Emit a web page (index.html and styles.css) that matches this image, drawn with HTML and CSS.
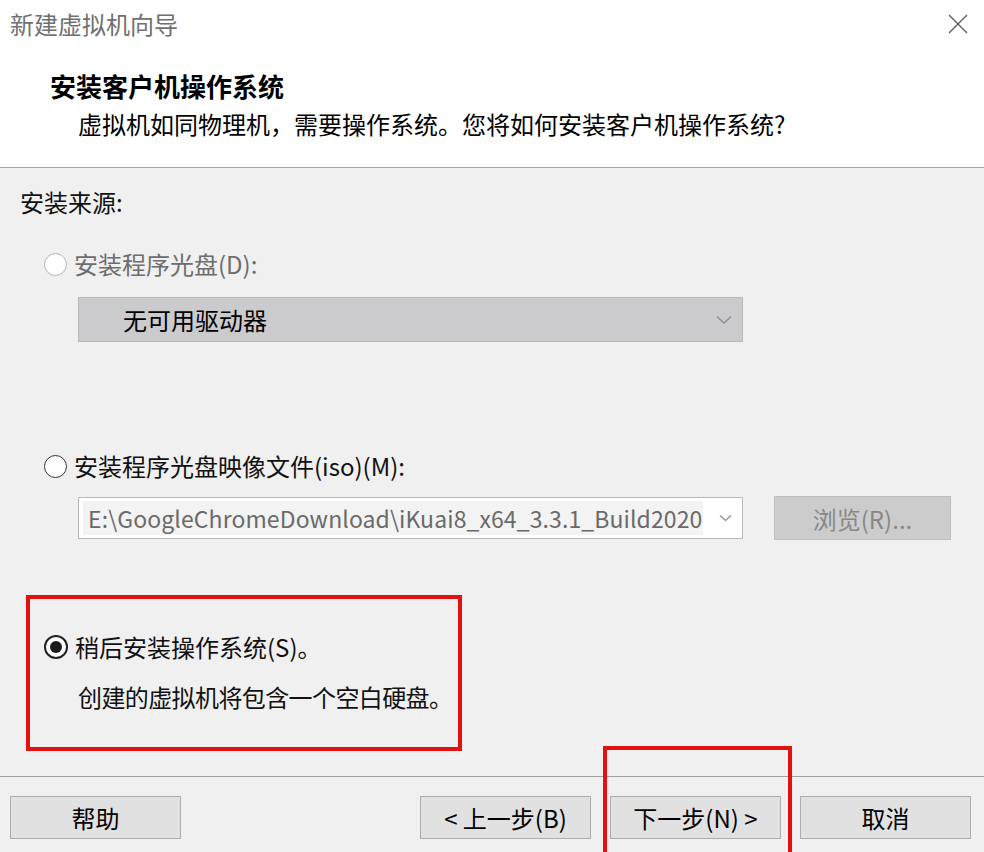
FILE: index.html
```html
<!DOCTYPE html>
<html lang="zh-CN">
<head>
  <meta charset="UTF-8" />
  <meta name="viewport" content="width=device-width, initial-scale=1.0"/>
  <title>新建虚拟机向导</title>
  <link rel="stylesheet" href="styles.css">
</head>
<body>
  <div class="ventana">
    <div class="titlebar">
      <span class="titulo">新建虚拟机向导</span>
      <svg class="cerrar" width="20" height="20" viewBox="0 0 20 20">
        <path d="M1 1 L19 19 M19 1 L1 19" stroke="#5a5a5a" stroke-width="1.3" fill="none"/>
      </svg>
    </div>

    <div class="cabecera">
      <h1>安装客户机操作系统</h1>
      <p>虚拟机如同物理机，需要操作系统。您将如何安装客户机操作系统?</p>
    </div>

    <div class="principal">
      <div class="etiqueta">安装来源:</div>

      <div class="radio desactivado"><span class="circulo"></span>安装程序光盘(D):</div>
      <div class="selector desactivado">
        <span>无可用驱动器</span>
        <svg width="16" height="10" viewBox="0 0 16 10"><path d="M1 1.5 L8 8 L15 1.5" stroke="#8c8c8c" stroke-width="1.3" fill="none"/></svg>
      </div>

      <div class="radio espacio-iso"><span class="circulo"></span>安装程序光盘映像文件(iso)(M):</div>
      <div class="fila-iso">
        <div class="combo">
          <span class="ruta">E:\GoogleChromeDownload\iKuai8_x64_3.3.1_Build2020</span>
          <svg width="13" height="8" viewBox="0 0 13 8"><path d="M1 1.5 L6.5 6.5 L12 1.5" stroke="#8c8c8c" stroke-width="1.2" fill="none"/></svg>
        </div>
        <button class="examinar">浏览(R)...</button>
      </div>

      <div class="despues">
        <div class="radio"><span class="circulo marcado"></span>稍后安装操作系统(S)。</div>
        <div class="nota">创建的虚拟机将包含一个空白硬盘。</div>
      </div>
    </div>

    <div class="pie">
      <button class="boton">帮助</button>
      <div class="navegacion">
        <button class="boton">&lt; 上一步(B)</button>
        <button class="boton">下一步(N) &gt;</button>
        <button class="boton">取消</button>
      </div>
      <div class="marca"></div>
    </div>
  </div>
</body>
</html>
```

FILE: styles.css
```css
body {
  margin: 0;
  font-family: "Noto Sans CJK SC", "Noto Sans", sans-serif;
  background-color: #f0f0f0;
  color: #111;
}

.ventana {
  width: 984px;
  height: 852px;
  overflow: hidden;
  background-color: #f0f0f0;
}

.titlebar {
  height: 48px;
  background-color: #fff;
  display: flex;
  align-items: center;
  justify-content: space-between;
  padding: 0 16px 0 10px;
}

.titulo {
  font-size: 24px;
  color: #707070;
  line-height: 48px;
}

.cabecera {
  height: 120px;
  box-sizing: border-box;
  background-color: #fff;
  border-bottom: 1px solid #a9a9a9;
  padding: 22px 0 0 50px;
}

.cabecera h1 {
  margin: 0;
  font-size: 26px;
  line-height: 32px;
  font-weight: bold;
  color: #000;
}

.cabecera p {
  margin: 6px 0 0 28px;
  font-size: 24px;
  line-height: 32px;
  color: #000;
}

.principal {
  height: 609px;
  box-sizing: border-box;
  padding: 18px 0 0 20px;
  border-bottom: 1px solid #a0a0a0;
  font-size: 24px;
}

.etiqueta {
  line-height: 32px;
}

.radio {
  display: flex;
  align-items: center;
  gap: 7px;
  line-height: 32px;
  margin-top: 30px;
  padding-left: 24px;
  white-space: nowrap;
}

.circulo {
  width: 21px;
  height: 21px;
  border: 1.5px solid #333;
  border-radius: 50%;
  background-color: #fff;
  display: flex;
  align-items: center;
  justify-content: center;
}

.desactivado .circulo {
  border-color: #b4b4b4;
}

.radio.desactivado {
  color: #6d6d6d;
}

.marcado {
  border: 2px solid #222;
  width: 20px;
  height: 20px;
}

.marcado::after {
  content: "";
  width: 12px;
  height: 12px;
  border-radius: 50%;
  background-color: #1a1a1a;
}

.selector {
  margin: 17px 0 0 58px;
  width: 665px;
  height: 45px;
  box-sizing: border-box;
  background-color: #cbcbcd;
  border: 1px solid #bababa;
  display: flex;
  align-items: center;
  justify-content: space-between;
  padding: 0 10px 0 44px;
  color: #000;
}

.espacio-iso {
  margin-top: 108px;
}

.fila-iso {
  margin: 14px 0 0 58px;
  display: flex;
  align-items: flex-start;
  gap: 31px;
}

.combo {
  margin-top: 1px;
  width: 665px;
  height: 42px;
  box-sizing: border-box;
  background-color: #fff;
  border: 1px solid #b8b8b8;
  display: flex;
  align-items: center;
  justify-content: space-between;
  padding: 0 10px 0 4px;
}

.ruta {
  background-color: #f3f3f3;
  color: #6a6a6a;
  padding: 0 0 0 5px;
  line-height: 34px;
  white-space: nowrap;
  width: 620px;
  box-sizing: border-box;
  overflow: hidden;
  font-size: 23px;
  letter-spacing: 0.1px;
}

.examinar {
  width: 177px;
  height: 44px;
  font-family: inherit;
  font-size: 24px;
  color: #888;
  background-color: #cccccc;
  border: 1px solid #bfbfbf;
  padding: 0;
}

.despues {
  margin: 55px 0 0 6px;
  width: 436px;
  height: 156px;
  box-sizing: border-box;
  border: 4px solid #e3120f;
  padding: 32px 0 0 14px;
}

.despues .radio {
  margin-top: 0;
  padding-left: 0;
}

.nota {
  margin: 18px 0 0 34px;
  line-height: 32px;
  white-space: nowrap;
  letter-spacing: -0.6px;
}

.pie {
  position: relative;
  display: flex;
  justify-content: space-between;
  padding: 19px 13px 0 10px;
}

.navegacion {
  display: flex;
  gap: 19px;
}

.boton {
  width: 171px;
  height: 43px;
  font-family: inherit;
  font-size: 24px;
  color: #000;
  background-color: #e1e1e1;
  border: 1px solid #adadad;
  padding: 0;
}

.marca {
  position: absolute;
  left: 603px;
  top: -31px;
  width: 189px;
  height: 120px;
  box-sizing: border-box;
  border: 4px solid #e3120f;
}
```
